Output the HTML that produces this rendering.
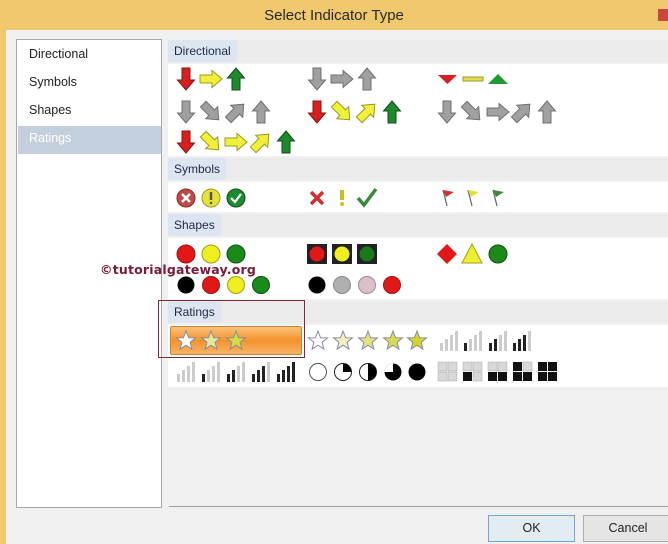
<!DOCTYPE html>
<html><head><meta charset="utf-8"><style>
*{margin:0;padding:0;box-sizing:border-box}
body{width:668px;height:544px;overflow:hidden;background:#f0c86e;font-family:"Liberation Sans",sans-serif;position:relative}
.abs{position:absolute}
#title{left:0;top:0;width:668px;height:30px;text-align:center;line-height:31px;font-size:15px;color:#2a2a2a}
#close{right:0;top:9px;width:10px;height:12px;background:#c9473e}
#body{left:6px;top:30px;width:662px;height:514px;background:#f0f0f0}
#list{left:16px;top:39px;width:146px;height:469px;background:#fff;border:1px solid #a8a8a8}
.li{position:absolute;left:12px;font-size:12.5px;color:#222}
#sel{left:1px;top:86px;width:143px;height:28px;background:#c3cfdc}
.hdr{position:absolute;left:168px;width:500px;height:22px;background:#ebebeb}
.hl{position:absolute;left:0;top:0;height:22px;padding:0 6px;background:#dde6f0;font-size:12px;line-height:22px;color:#1d2a45}
.row{position:absolute;left:168px;width:500px;background:#fff}
.btn{position:absolute;top:515px;height:27px;border:1px solid #adadad;background:#e5e5e5;font-size:12.5px;text-align:center;line-height:25px;color:#222}
</style></head><body>
<div class="abs" id="title">Select Indicator Type</div>
<div class="abs" id="close"></div>
<div class="abs" id="body"></div>
<div class="abs" id="list">
<div class="abs" id="sel"></div>
<div class="li" style="top:7px">Directional</div>
<div class="li" style="top:35px">Symbols</div>
<div class="li" style="top:63px">Shapes</div>
<div class="li" style="top:91px;color:#fff">Ratings</div>
</div>
<div class="hdr" style="top:40px"><div class="hl">Directional</div></div>
<div class="row" style="top:64px;height:92px"></div>
<div class="hdr" style="top:158px"><div class="hl">Symbols</div></div>
<div class="row" style="top:182px;height:30px"></div>
<div class="hdr" style="top:214px"><div class="hl">Shapes</div></div>
<div class="row" style="top:238px;height:61px"></div>
<div class="hdr" style="top:301px"><div class="hl">Ratings</div></div>
<div class="row" style="top:325px;height:62px"></div>
<div class="abs" style="left:170px;top:326px;width:132px;height:29px;border:1px solid #c9842e;border-radius:2px;background:linear-gradient(#fbc27a,#f3922c 50%,#f8b466)"></div>
<div class="abs" style="left:158px;top:300px;width:147px;height:58px;border:1px solid #7d2a3a"></div>
<div class="abs" style="left:169px;top:506px;width:499px;height:1px;background:#a0a0a0"></div>
<div class="btn" style="left:488px;width:87px;border-color:#6fa6d8;background:#e3ebf3">OK</div>
<div class="btn" style="left:583px;width:90px">Cancel</div>
<div class="abs" style="left:100px;top:262px;font-size:12.5px;font-weight:bold;color:#7a1a38;font-family:'DejaVu Sans',sans-serif;letter-spacing:0.2px">©tutorialgateway.org</div>
<svg class="abs" style="left:0;top:0" width="668" height="544" viewBox="0 0 668 544">
<defs>
<path id="ar" d="M0 -11 L8.5 -1 L4 -1 L4 11 L-4 11 L-4 -1 L-8.5 -1 Z" stroke-width="1"/>
<path id="st" d="M0 -10 L2.6 -3.2 L9.5 -3.1 L4.1 1.3 L5.9 8.1 L0 4.2 L-5.9 8.1 L-4.1 1.3 L-9.5 -3.1 L-2.6 -3.2 Z" stroke="#8a8aa0" stroke-width="1"/>
</defs>
<use href="#ar" transform="translate(186,79) rotate(180)" fill="#d81f1f" stroke="#8a1010"/>
<use href="#ar" transform="translate(211,79) rotate(90)" fill="#f0f03a" stroke="#9a9a20"/>
<use href="#ar" transform="translate(236,79)" fill="#1e8a2e" stroke="#0d4f17"/>
<use href="#ar" transform="translate(317,79) rotate(180)" fill="#a0a0a0" stroke="#707070"/>
<use href="#ar" transform="translate(342,79) rotate(90)" fill="#a0a0a0" stroke="#707070"/>
<use href="#ar" transform="translate(367,79)" fill="#a0a0a0" stroke="#707070"/>
<path d="M438 75 L457 75 L447.5 84 Z" fill="#d42020"/>
<rect x="463" y="77" width="20" height="4" fill="#dede50" stroke="#9a9a20" stroke-width="1"/>
<path d="M488 84 L508 84 L498 74 Z" fill="#1e9a2e"/>
<use href="#ar" transform="translate(186,112) rotate(180)" fill="#a0a0a0" stroke="#707070"/>
<use href="#ar" transform="translate(211,112) rotate(135)" fill="#a0a0a0" stroke="#707070"/>
<use href="#ar" transform="translate(236,112) rotate(45)" fill="#a0a0a0" stroke="#707070"/>
<use href="#ar" transform="translate(261,112)" fill="#a0a0a0" stroke="#707070"/>
<use href="#ar" transform="translate(317,112) rotate(180)" fill="#d81f1f" stroke="#8a1010"/>
<use href="#ar" transform="translate(342,112) rotate(135)" fill="#f0f03a" stroke="#9a9a20"/>
<use href="#ar" transform="translate(367,112) rotate(45)" fill="#f0f03a" stroke="#9a9a20"/>
<use href="#ar" transform="translate(392,112)" fill="#1e8a2e" stroke="#0d4f17"/>
<use href="#ar" transform="translate(447,112) rotate(180)" fill="#a0a0a0" stroke="#707070"/>
<use href="#ar" transform="translate(472,112) rotate(135)" fill="#a0a0a0" stroke="#707070"/>
<use href="#ar" transform="translate(498,112) rotate(90)" fill="#a0a0a0" stroke="#707070"/>
<use href="#ar" transform="translate(522,112) rotate(45)" fill="#a0a0a0" stroke="#707070"/>
<use href="#ar" transform="translate(547,112)" fill="#a0a0a0" stroke="#707070"/>
<use href="#ar" transform="translate(186,142) rotate(180)" fill="#d81f1f" stroke="#8a1010"/>
<use href="#ar" transform="translate(211,142) rotate(135)" fill="#f0f03a" stroke="#9a9a20"/>
<use href="#ar" transform="translate(236,142) rotate(90)" fill="#f0f03a" stroke="#9a9a20"/>
<use href="#ar" transform="translate(261,142) rotate(45)" fill="#f0f03a" stroke="#9a9a20"/>
<use href="#ar" transform="translate(286,142)" fill="#1e8a2e" stroke="#0d4f17"/>
<circle cx="186" cy="198" r="9" fill="#c04a4a" stroke="#8a2a2a"/>
<path d="M182 194 L190 202 M190 194 L182 202" stroke="#fff" stroke-width="2.5"/>
<circle cx="211" cy="198" r="9" fill="#e6e23a" stroke="#9a9a20"/>
<path d="M211 192 L211 200" stroke="#555" stroke-width="2.5"/><circle cx="211" cy="203" r="1.3" fill="#555"/>
<circle cx="236" cy="198" r="9" fill="#1e8a2e" stroke="#0d4f17"/>
<path d="M231 198 L235 202 L241 194" stroke="#fff" stroke-width="2.2" fill="none"/>
<path d="M311 192 L323 204 M323 192 L311 204" stroke="#d03030" stroke-width="3.5"/>
<path d="M342 190 L342 200" stroke="#c8c020" stroke-width="4"/><circle cx="342" cy="204" r="2" fill="#c8c020"/>
<path d="M358 198 L364 205 L376 189" stroke="#3a8a3a" stroke-width="3.5" fill="none"/>
<path d="M443 190 L447 206" stroke="#666" stroke-width="1.2"/><path d="M443 190 L454 192 L446 197 Z" fill="#d03030"/>
<path d="M468 190 L472 206" stroke="#666" stroke-width="1.2"/><path d="M468 190 L479 192 L471 197 Z" fill="#e0e040"/>
<path d="M493 190 L497 206" stroke="#666" stroke-width="1.2"/><path d="M493 190 L504 192 L496 197 Z" fill="#3a8a3a"/>
<circle cx="186" cy="254" r="9" fill="#e01818" stroke="#a01010"/>
<circle cx="211" cy="254" r="9" fill="#eeee20" stroke="#a0a010"/>
<circle cx="236" cy="254" r="9" fill="#1a8a1a" stroke="#0d5010"/>
<rect x="307" y="244" width="20" height="20" fill="#222"/><circle cx="317" cy="254" r="7.5" fill="#e01818"/>
<rect x="332" y="244" width="20" height="20" fill="#222"/><circle cx="342" cy="254" r="7.5" fill="#eeee20"/>
<rect x="357" y="244" width="20" height="20" fill="#222"/><circle cx="367" cy="254" r="7.5" fill="#1a7a1a"/>
<path d="M447 244 L457 254 L447 264 L437 254 Z" fill="#e01818"/>
<path d="M472 244 L482 263 L462 263 Z" fill="#eeee30" stroke="#a0a010"/>
<circle cx="498" cy="254" r="9" fill="#1a8a1a" stroke="#0d5010"/>
<circle cx="186" cy="285" r="8.5" fill="#000"/>
<circle cx="211" cy="285" r="8.5" fill="#e01818" stroke="#a01010"/>
<circle cx="236" cy="285" r="8.5" fill="#eeee20" stroke="#a0a010"/>
<circle cx="261" cy="285" r="8.5" fill="#1a8a1a" stroke="#0d5010"/>
<circle cx="317" cy="285" r="8.5" fill="#000"/>
<circle cx="342" cy="285" r="8.5" fill="#b0b0b0" stroke="#888"/>
<circle cx="367" cy="285" r="8.5" fill="#dcc0c8" stroke="#a08890"/>
<circle cx="392" cy="285" r="8.5" fill="#e01818" stroke="#a01010"/>
<use href="#st" transform="translate(186,341)" fill="#fff"/>
<use href="#st" transform="translate(211,341)" fill="#e6e8a0"/>
<use href="#st" transform="translate(236,341)" fill="#d4dc40"/>
<use href="#st" transform="translate(318,341)" fill="#fff"/>
<use href="#st" transform="translate(343,341)" fill="#f0f0c0"/>
<use href="#st" transform="translate(368,341)" fill="#e0e480"/>
<use href="#st" transform="translate(393,341)" fill="#d6dc50"/>
<use href="#st" transform="translate(417,341)" fill="#d0d830"/>
<g transform="translate(440,331)"><rect x="0" y="12" width="3" height="8" fill="#ccc"/><rect x="5" y="8" width="3" height="12" fill="#ccc"/><rect x="10" y="4" width="3" height="16" fill="#ccc"/><rect x="15" y="0" width="3" height="20" fill="#ccc"/></g>
<g transform="translate(464,331)"><rect x="0" y="12" width="3" height="8" fill="#222"/><rect x="5" y="8" width="3" height="12" fill="#ccc"/><rect x="10" y="4" width="3" height="16" fill="#ccc"/><rect x="15" y="0" width="3" height="20" fill="#ccc"/></g>
<g transform="translate(489,331)"><rect x="0" y="12" width="3" height="8" fill="#222"/><rect x="5" y="8" width="3" height="12" fill="#222"/><rect x="10" y="4" width="3" height="16" fill="#ccc"/><rect x="15" y="0" width="3" height="20" fill="#ccc"/></g>
<g transform="translate(513,331)"><rect x="0" y="12" width="3" height="8" fill="#222"/><rect x="5" y="8" width="3" height="12" fill="#222"/><rect x="10" y="4" width="3" height="16" fill="#222"/><rect x="15" y="0" width="3" height="20" fill="#ccc"/></g>
<g transform="translate(177,362)"><rect x="0" y="12" width="3" height="8" fill="#ccc"/><rect x="5" y="8" width="3" height="12" fill="#ccc"/><rect x="10" y="4" width="3" height="16" fill="#ccc"/><rect x="15" y="0" width="3" height="20" fill="#ccc"/></g>
<g transform="translate(202,362)"><rect x="0" y="12" width="3" height="8" fill="#222"/><rect x="5" y="8" width="3" height="12" fill="#ccc"/><rect x="10" y="4" width="3" height="16" fill="#ccc"/><rect x="15" y="0" width="3" height="20" fill="#ccc"/></g>
<g transform="translate(227,362)"><rect x="0" y="12" width="3" height="8" fill="#222"/><rect x="5" y="8" width="3" height="12" fill="#222"/><rect x="10" y="4" width="3" height="16" fill="#ccc"/><rect x="15" y="0" width="3" height="20" fill="#ccc"/></g>
<g transform="translate(252,362)"><rect x="0" y="12" width="3" height="8" fill="#222"/><rect x="5" y="8" width="3" height="12" fill="#222"/><rect x="10" y="4" width="3" height="16" fill="#222"/><rect x="15" y="0" width="3" height="20" fill="#ccc"/></g>
<g transform="translate(277,362)"><rect x="0" y="12" width="3" height="8" fill="#222"/><rect x="5" y="8" width="3" height="12" fill="#222"/><rect x="10" y="4" width="3" height="16" fill="#222"/><rect x="15" y="0" width="3" height="20" fill="#222"/></g>
<circle cx="318" cy="372" r="8.5" fill="#fff" stroke="#555"/>
<circle cx="343" cy="372" r="8.5" fill="#fff" stroke="#222"/><path d="M343 372 L343 363.5 A8.5 8.5 0 0 1 351.5 372 Z" fill="#000"/>
<circle cx="368" cy="372" r="8.5" fill="#fff" stroke="#222"/><path d="M368 363.5 A8.5 8.5 0 0 1 368 380.5 Z" fill="#000"/>
<circle cx="393" cy="372" r="8.5" fill="#000"/><path d="M393 372 L393 363.5 A8.5 8.5 0 0 0 384.5 372 Z" fill="#fff"/>
<circle cx="417" cy="372" r="8.5" fill="#000"/>
<g fill="#d8d8d8" stroke="#aaa" stroke-width=".5">
<rect x="438" y="362" width="9" height="9"/><rect x="448" y="362" width="9" height="9"/><rect x="438" y="372" width="9" height="9"/><rect x="448" y="372" width="9" height="9"/>
<rect x="463" y="362" width="9" height="9"/><rect x="473" y="362" width="9" height="9"/><rect x="473" y="372" width="9" height="9"/>
<rect x="488" y="362" width="9" height="9"/><rect x="498" y="362" width="9" height="9"/>
<rect x="523" y="362" width="9" height="9"/>
</g>
<g fill="#111">
<rect x="463" y="372" width="9" height="9"/>
<rect x="488" y="372" width="9" height="9"/><rect x="498" y="372" width="9" height="9"/>
<rect x="513" y="362" width="9" height="9"/><rect x="513" y="372" width="9" height="9"/><rect x="523" y="372" width="9" height="9"/>
<rect x="538" y="362" width="9" height="9"/><rect x="548" y="362" width="9" height="9"/><rect x="538" y="372" width="9" height="9"/><rect x="548" y="372" width="9" height="9"/>
</g>
</svg>
</body></html>
